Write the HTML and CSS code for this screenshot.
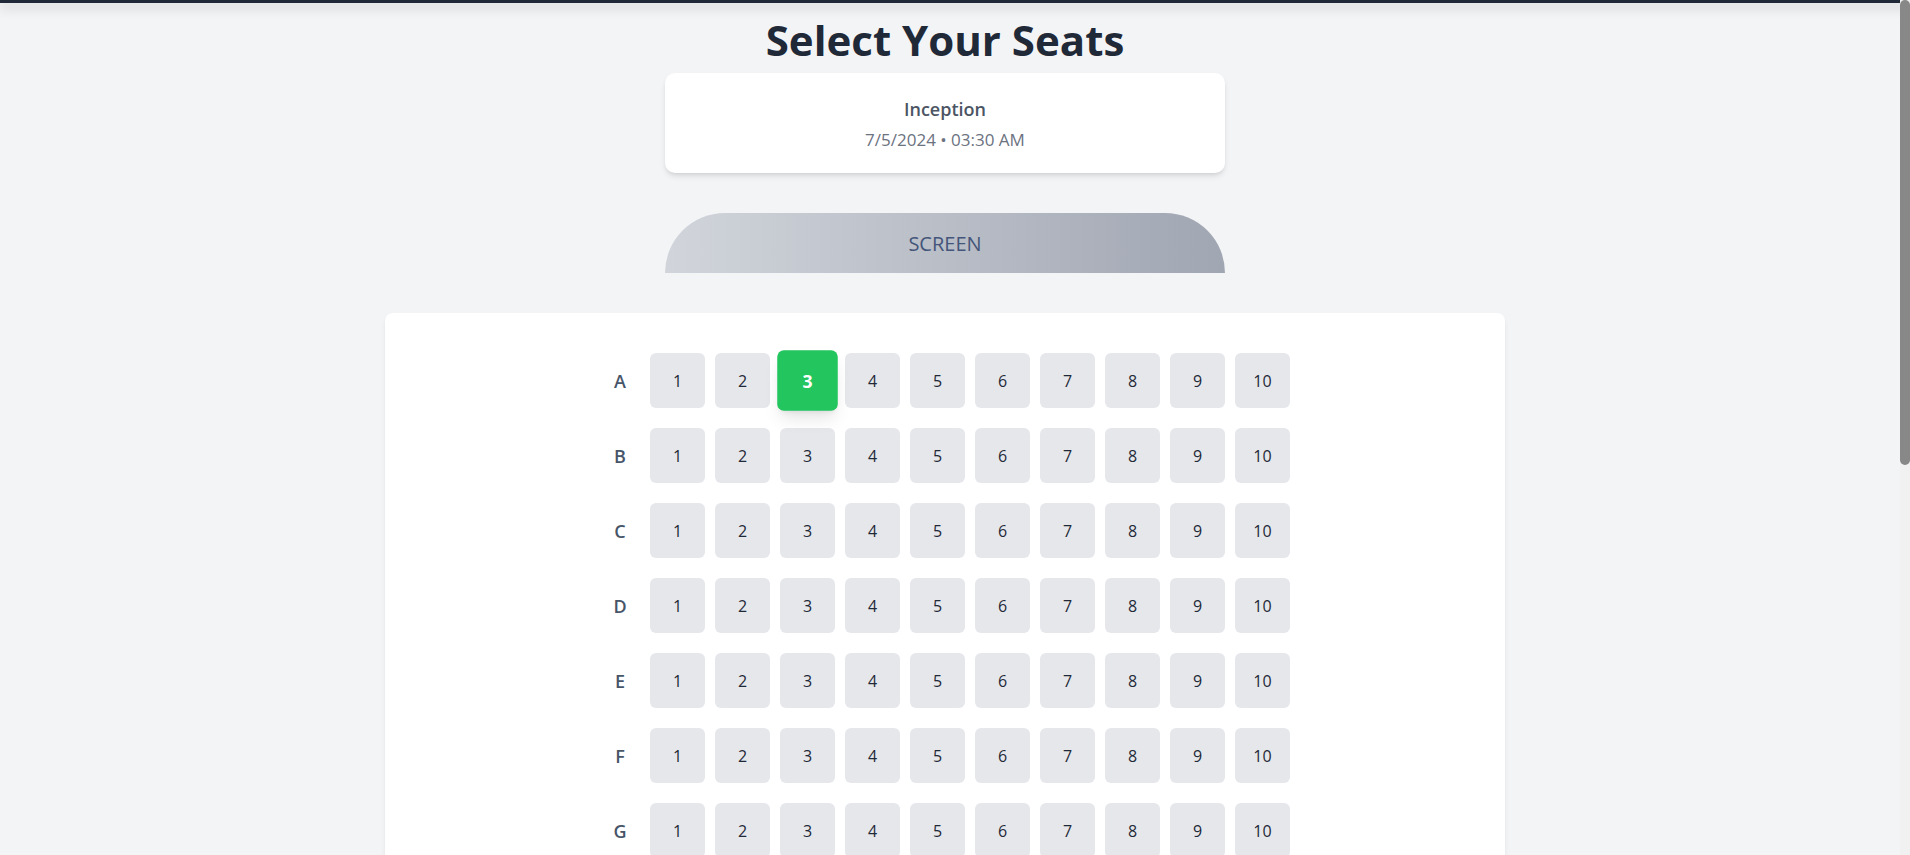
FILE: index.html
```html
<!DOCTYPE html>
<html lang="en">
<head>
<meta charset="utf-8">
<title>Select Your Seats</title>
<link rel="stylesheet" href="styles.css">
</head>
<body>
<div class="topbar"></div>
<main class="page">
  <h1 class="title">Select Your Seats</h1>
  <section class="info-card">
    <h2 class="movie">Inception</h2>
    <p class="showtime">7/5/2024 • 03:30 AM</p>
  </section>
  <div class="screen">SCREEN</div>
  <section class="seat-card">
    <div class="rows">
      <div class="row"><span class="row-label">A</span><button class="seat">1</button><button class="seat">2</button><button class="seat selected">3</button><button class="seat">4</button><button class="seat">5</button><button class="seat">6</button><button class="seat">7</button><button class="seat">8</button><button class="seat">9</button><button class="seat">10</button></div>
      <div class="row"><span class="row-label">B</span><button class="seat">1</button><button class="seat">2</button><button class="seat">3</button><button class="seat">4</button><button class="seat">5</button><button class="seat">6</button><button class="seat">7</button><button class="seat">8</button><button class="seat">9</button><button class="seat">10</button></div>
      <div class="row"><span class="row-label">C</span><button class="seat">1</button><button class="seat">2</button><button class="seat">3</button><button class="seat">4</button><button class="seat">5</button><button class="seat">6</button><button class="seat">7</button><button class="seat">8</button><button class="seat">9</button><button class="seat">10</button></div>
      <div class="row"><span class="row-label">D</span><button class="seat">1</button><button class="seat">2</button><button class="seat">3</button><button class="seat">4</button><button class="seat">5</button><button class="seat">6</button><button class="seat">7</button><button class="seat">8</button><button class="seat">9</button><button class="seat">10</button></div>
      <div class="row"><span class="row-label">E</span><button class="seat">1</button><button class="seat">2</button><button class="seat">3</button><button class="seat">4</button><button class="seat">5</button><button class="seat">6</button><button class="seat">7</button><button class="seat">8</button><button class="seat">9</button><button class="seat">10</button></div>
      <div class="row"><span class="row-label">F</span><button class="seat">1</button><button class="seat">2</button><button class="seat">3</button><button class="seat">4</button><button class="seat">5</button><button class="seat">6</button><button class="seat">7</button><button class="seat">8</button><button class="seat">9</button><button class="seat">10</button></div>
      <div class="row"><span class="row-label">G</span><button class="seat">1</button><button class="seat">2</button><button class="seat">3</button><button class="seat">4</button><button class="seat">5</button><button class="seat">6</button><button class="seat">7</button><button class="seat">8</button><button class="seat">9</button><button class="seat">10</button></div>
      <div class="row"><span class="row-label">H</span><button class="seat">1</button><button class="seat">2</button><button class="seat">3</button><button class="seat">4</button><button class="seat">5</button><button class="seat">6</button><button class="seat">7</button><button class="seat">8</button><button class="seat">9</button><button class="seat">10</button></div>
      <div class="row"><span class="row-label">I</span><button class="seat">1</button><button class="seat">2</button><button class="seat">3</button><button class="seat">4</button><button class="seat">5</button><button class="seat">6</button><button class="seat">7</button><button class="seat">8</button><button class="seat">9</button><button class="seat">10</button></div>
      <div class="row"><span class="row-label">J</span><button class="seat">1</button><button class="seat">2</button><button class="seat">3</button><button class="seat">4</button><button class="seat">5</button><button class="seat">6</button><button class="seat">7</button><button class="seat">8</button><button class="seat">9</button><button class="seat">10</button></div>
    </div>
    <div class="legend">
      <span class="legend-item"><span class="swatch swatch-free"></span>Available</span>
      <span class="legend-item"><span class="swatch swatch-selected"></span>Selected</span>
      <span class="legend-item"><span class="swatch swatch-taken"></span>Booked</span>
    </div>
  </section>
  <section class="summary-card">
    <h3 class="summary-title">Booking Summary</h3>
    <p class="summary-line">Selected Seats: A3</p>
    <p class="summary-line">Total: $12.00</p>
    <button class="proceed">Proceed to Payment</button>
  </section>
</main>
<div class="scrollbar" aria-hidden="true"><div class="scrollbar-thumb"></div></div>
</body>
</html>
```

FILE: styles.css
```css
html {
  background: #f3f4f6;
}

body {
  margin: 0;
  background: #f3f4f6;
  font-family: "Open Sans", "Noto Sans", sans-serif;
  color: #1f2937;
}

.topbar {
  position: relative;
  z-index: 2;
  height: 3px;
  background: #1f2937;
  box-shadow: 0 4px 12px 1px rgba(0, 0, 0, 0.16);
}

.page {
  padding: 13px 20px 145px 0;
  display: flex;
  flex-direction: column;
  align-items: center;
}

.title {
  margin: 0 0 9px;
  font-size: 42px;
  line-height: 48px;
  font-weight: 700;
  color: #1f2937;
  text-align: center;
}

.info-card {
  width: 560px;
  box-sizing: border-box;
  padding: 22px 24px 21px;
  background: #ffffff;
  border-radius: 10px;
  box-shadow: 0 4px 6px -1px rgba(0, 0, 0, 0.1), 0 2px 4px -2px rgba(0, 0, 0, 0.1);
  text-align: center;
}

.movie {
  margin: 0;
  font-size: 18px;
  line-height: 28px;
  font-weight: 600;
  color: #4b5563;
}

.showtime {
  margin: 5px 0 0;
  font-size: 17px;
  line-height: 24px;
  color: #6b7280;
}

.screen {
  margin-top: 40px;
  width: 560px;
  height: 60px;
  border-radius: 60px 60px 0 0;
  background: linear-gradient(to right, #d1d5db, #a0a6b2);
  display: flex;
  align-items: center;
  justify-content: center;
  font-size: 20px;
  color: #44557a;
}

.seat-card {
  margin-top: 40px;
  width: 1120px;
  box-sizing: border-box;
  padding: 40px;
  background: #ffffff;
  border-radius: 8px;
  box-shadow: 0 4px 6px -1px rgba(0, 0, 0, 0.08), 0 2px 4px -2px rgba(0, 0, 0, 0.06);
}

.rows {
  display: flex;
  flex-direction: column;
  gap: 20px;
}

.row {
  display: flex;
  align-items: center;
  justify-content: center;
  gap: 10px;
}

.row-label {
  width: 40px;
  text-align: center;
  font-size: 18px;
  font-weight: 600;
  color: #475569;
}

.seat {
  width: 55px;
  height: 55px;
  padding: 0;
  border: none;
  border-radius: 6px;
  background: #e5e7eb;
  font-family: "Open Sans", "Noto Sans", sans-serif;
  font-size: 16px;
  color: #1f2937;
  cursor: pointer;
}

.seat.selected {
  background: #22c55e;
  color: #ffffff;
  font-weight: 700;
  transform: scale(1.1);
  box-shadow: 0 10px 15px -3px rgba(0, 0, 0, 0.1), 0 4px 6px -4px rgba(0, 0, 0, 0.1);
}

.legend {
  margin-top: 40px;
  display: flex;
  justify-content: center;
  gap: 32px;
  font-size: 15px;
  line-height: 24px;
  color: #4b5563;
}

.legend-item {
  display: flex;
  align-items: center;
  gap: 8px;
}

.swatch {
  width: 20px;
  height: 20px;
  border-radius: 4px;
}

.swatch-free {
  background: #e5e7eb;
}

.swatch-selected {
  background: #22c55e;
}

.swatch-taken {
  background: #ef4444;
}

.summary-card {
  margin-top: 40px;
  width: 560px;
  box-sizing: border-box;
  padding: 24px;
  background: #ffffff;
  border-radius: 10px;
  box-shadow: 0 4px 6px -1px rgba(0, 0, 0, 0.1), 0 2px 4px -2px rgba(0, 0, 0, 0.1);
}

.summary-title {
  margin: 0 0 12px;
  font-size: 18px;
  line-height: 28px;
  font-weight: 600;
  color: #1f2937;
}

.summary-line {
  margin: 0;
  font-size: 16px;
  line-height: 24px;
  color: #4b5563;
}

.proceed {
  margin-top: 16px;
  width: 100%;
  height: 48px;
  border: none;
  border-radius: 8px;
  background: #22c55e;
  color: #ffffff;
  font-family: "Open Sans", "Noto Sans", sans-serif;
  font-size: 16px;
  font-weight: 600;
}

/* browser-style vertical scrollbar, drawn over the page edge */
.scrollbar {
  position: fixed;
  top: 0;
  right: 0;
  z-index: 5;
  width: 10px;
  height: 100vh;
  background: #f1f1f1;
}

.scrollbar-thumb {
  height: 465px;
  background: #888888;
  border-radius: 5px;
}
```
